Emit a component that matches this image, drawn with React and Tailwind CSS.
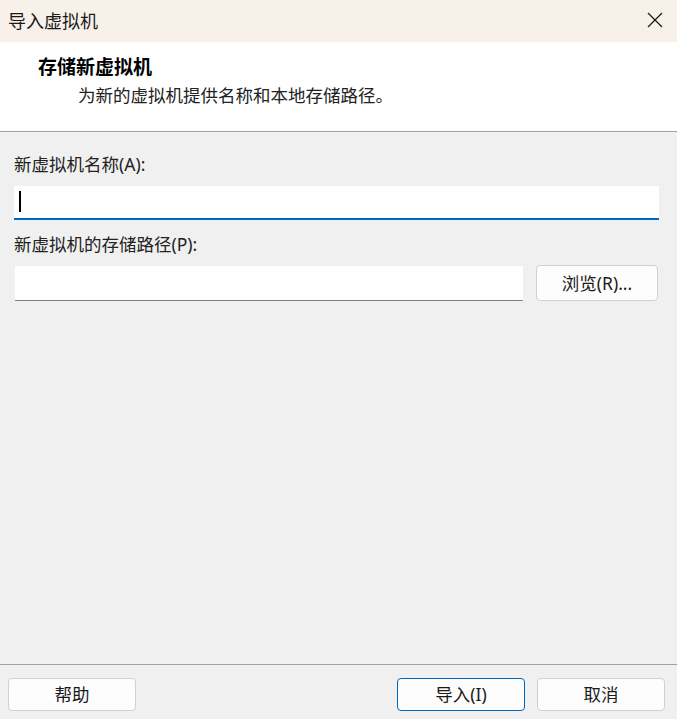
import React from "react";

const cjk = { fontFamily: '"Segoe UI", "Noto Sans", "Noto Sans CJK SC", sans-serif' };

export default function App() {
  return (
    <div className="w-[677px] h-[719px] flex flex-col bg-[#f0f0f0] overflow-hidden" style={cjk}>
      {/* Title bar */}
      <div className="h-[42px] shrink-0 bg-[#f8f1ea] flex items-center justify-between pl-[8px] pr-[14px]">
        <span className="text-[18px] text-[#1a1a1a] leading-none">导入虚拟机</span>
        <svg width="16" height="16" viewBox="0 0 16 16" className="mt-[-2px]">
          <path d="M1 1 L15 15 M15 1 L1 15" stroke="#1a1a1a" strokeWidth="1.3" fill="none" />
        </svg>
      </div>
      {/* Header */}
      <div className="h-[90px] shrink-0 bg-white border-b border-[#a0a0a0] flex flex-col pt-[14px]">
        <div className="pl-[38px] text-[19px] font-bold leading-[22px] text-black">存储新虚拟机</div>
        <div className="pl-[78px] mt-[6px] text-[17.5px] leading-[22px] text-[#222]">为新的虚拟机提供名称和本地存储路径。</div>
      </div>
      {/* Body */}
      <div className="flex-1 flex flex-col px-[14px]">
        <div className="mt-[21px] text-[17.5px] leading-[22px] text-[#222]">新虚拟机名称(A):</div>
        <div className="mt-[11px] h-[34px] bg-white border-b-2 border-[#0067c0] mr-[4px] flex items-center pl-[5px]">
          <div className="w-[2px] h-[21px] bg-black mb-[2px]" />
        </div>
        <div className="mt-[13px] text-[17.5px] leading-[22px] text-[#222]">新虚拟机的存储路径(P):</div>
        <div className="mt-[11px] flex gap-[13px] mr-[5px] items-start">
          <div className="flex-1 h-[35px] bg-white border-b border-[#808080] ml-[1px]" />
          <button className="w-[122px] h-[36px] -mt-[1px] rounded-[4px] border border-[#d0d0d0] bg-[#fdfdfd] text-[17.5px] text-[#1a1a1a]">
            浏览(R)...
          </button>
        </div>
      </div>
      {/* Footer */}
      <div className="h-[55px] shrink-0 border-t border-[#a0a0a0] flex items-start pt-[13px] px-[8px]">
        <button className="w-[128px] h-[33px] rounded-[4px] border border-[#d0d0d0] bg-[#fdfdfd] text-[17.5px] text-[#1a1a1a]">
          帮助
        </button>
        <div className="flex-1" />
        <button className="w-[128px] h-[33px] rounded-[4px] border border-[#0067c0] bg-[#fdfdfd] text-[17.5px] text-[#1a1a1a]">
          导入(I)
        </button>
        <button className="ml-[12px] w-[128px] h-[33px] rounded-[4px] border border-[#d0d0d0] bg-[#fdfdfd] text-[17.5px] text-[#1a1a1a] mr-[4px]">
          取消
        </button>
      </div>
    </div>
  );
}
